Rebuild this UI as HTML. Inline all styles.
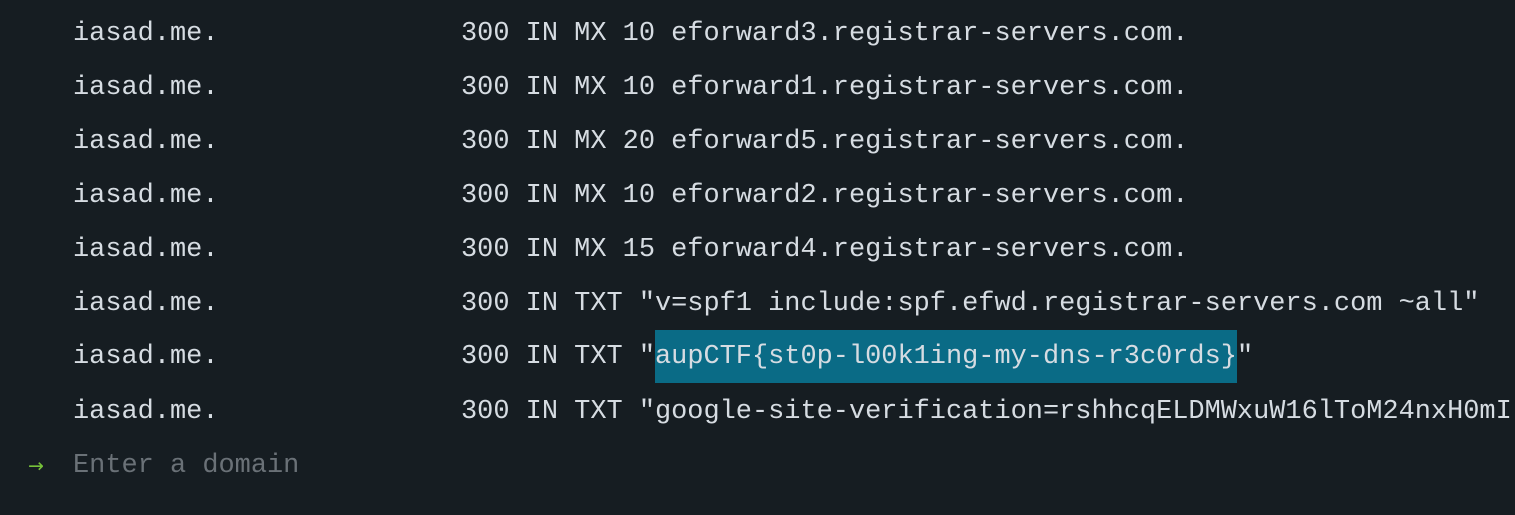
<!DOCTYPE html>
<html><head><meta charset="utf-8"><style>
html,body{margin:0;padding:0;background:#161d22;width:1515px;height:515px;overflow:hidden}
.l{position:absolute;height:54px;line-height:54px;font-family:"Liberation Mono",monospace;font-size:26.95px;color:#d6dce2;white-space:pre}
.a{left:73px}.b{left:461px}
.hl{background:#0a6b86;display:inline-block;height:53px}
.ph{color:#6a7177}
.ar{position:absolute;left:28px;top:453px;color:#76c13a;font-family:"DejaVu Sans",sans-serif;font-size:19px;line-height:26px}
</style></head><body>
<div class="l a" style="top:7px">iasad.me.</div><div class="l b" style="top:7px">300 IN MX 10 eforward3.registrar-servers.com.</div>
<div class="l a" style="top:61px">iasad.me.</div><div class="l b" style="top:61px">300 IN MX 10 eforward1.registrar-servers.com.</div>
<div class="l a" style="top:115px">iasad.me.</div><div class="l b" style="top:115px">300 IN MX 20 eforward5.registrar-servers.com.</div>
<div class="l a" style="top:169px">iasad.me.</div><div class="l b" style="top:169px">300 IN MX 10 eforward2.registrar-servers.com.</div>
<div class="l a" style="top:223px">iasad.me.</div><div class="l b" style="top:223px">300 IN MX 15 eforward4.registrar-servers.com.</div>
<div class="l a" style="top:277px">iasad.me.</div><div class="l b" style="top:277px">300 IN TXT "v=spf1 include:spf.efwd.registrar-servers.com ~all"</div>
<div class="l a" style="top:330px">iasad.me.</div><div class="l b" style="top:330px">300 IN TXT "<span class="hl">aupCTF{st0p-l00k1ing-my-dns-r3c0rds}</span>"</div>
<div class="l a" style="top:385px">iasad.me.</div><div class="l b" style="top:385px">300 IN TXT "google-site-verification=rshhcqELDMWxuW16lToM24nxH0mI</div>
<div class="ar">→</div>
<div class="l a ph" style="top:439px">Enter a domain</div>
</body></html>
